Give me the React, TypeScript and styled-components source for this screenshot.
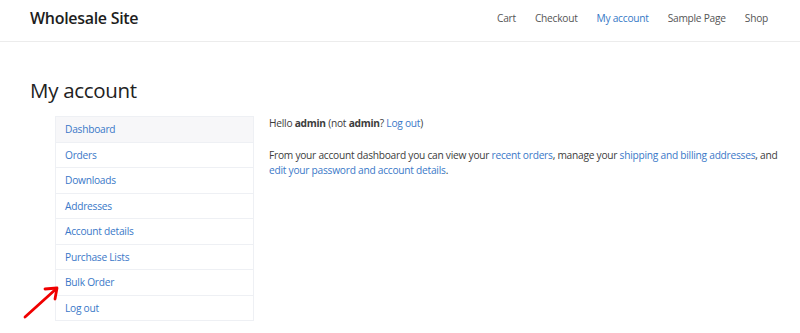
import styled, { createGlobalStyle } from "styled-components";

const GlobalStyle = createGlobalStyle`
  html, body {
    margin: 0;
    padding: 0;
    background: #ffffff;
  }
  body {
    font-family: "Open Sans", "Noto Sans", sans-serif;
    color: #3c3c3c;
  }
`;

const Header = styled.header`
  height: 42px;
  box-sizing: border-box;
  border-bottom: 1px solid #ececec;
  display: flex;
  align-items: center;
  justify-content: space-between;
  padding: 0 32px 0 30px;
`;

const SiteTitle = styled.div`
  font-size: 16px;
  font-weight: 600;
  color: #1d1d1d;
  letter-spacing: -0.3px;
  margin-top: -6px;
`;

const Nav = styled.nav`
  display: flex;
  gap: 19px;
  margin-top: -6px;
`;

const NavLink = styled.a<{ active?: boolean }>`
  font-size: 10.2px;
  color: ${(props) => (props.active ? "#3578c6" : "#555555")};
  text-decoration: none;
  letter-spacing: -0.25px;
`;

const Main = styled.main`
  padding: 33px 30px 0;
`;

const Title = styled.h1`
  margin: 0 0 11px;
  font-size: 20.5px;
  font-weight: 500;
  color: #222222;
  letter-spacing: -0.3px;
  line-height: 30px;
`;

const Columns = styled.div`
  display: flex;
  gap: 15px;
  padding-left: 25px;
`;

const SideWrap = styled.div`
  position: relative;
  flex-shrink: 0;
`;

const SideNav = styled.ul`
  list-style: none;
  margin: 0;
  padding: 0;
  width: 199px;
  box-sizing: border-box;
  border: 1px solid #eef0f4;
  border-bottom: none;
`;

const SideItem = styled.li<{ active?: boolean }>`
  height: 25.5px;
  box-sizing: border-box;
  border-bottom: 1px solid #eef0f4;
  background: ${(props) => (props.active ? "#f7f7f9" : "#ffffff")};
  display: flex;
  align-items: center;
  padding-left: 9px;
`;

const SideLink = styled.a`
  font-size: 10.2px;
  color: #3a78c8;
  text-decoration: none;
  letter-spacing: -0.25px;
`;

const Arrow = styled.svg`
  position: absolute;
  left: -34px;
  top: 165px;
`;

const Content = styled.div`
  font-size: 10.2px;
  line-height: 15px;
  color: #3c3c3c;
  letter-spacing: -0.25px;
  width: 512px;
  flex-shrink: 0;
`;

const Para = styled.p`
  margin: 0 0 17px;
`;

const Link = styled.a`
  color: #3a78c8;
  text-decoration: none;
`;

const navItems = [
  "Dashboard",
  "Orders",
  "Downloads",
  "Addresses",
  "Account details",
  "Purchase Lists",
  "Bulk Order",
  "Log out",
];

const App = () => {
  return (
    <>
      <GlobalStyle />
      <Header>
        <SiteTitle>Wholesale Site</SiteTitle>
        <Nav>
          <NavLink>Cart</NavLink>
          <NavLink>Checkout</NavLink>
          <NavLink active>My account</NavLink>
          <NavLink>Sample Page</NavLink>
          <NavLink>Shop</NavLink>
        </Nav>
      </Header>
      <Main>
        <Title>My account</Title>
        <Columns>
          <SideWrap>
            <SideNav>
              {navItems.map((item, i) => (
                <SideItem key={item} active={i === 0}>
                  <SideLink>{item}</SideLink>
                </SideItem>
              ))}
            </SideNav>
            <Arrow width="42" height="40" viewBox="0 0 42 40">
              <line
                x1="4"
                y1="36"
                x2="35"
                y2="8"
                stroke="#f00000"
                strokeWidth="2.8"
                strokeLinecap="round"
              />
              <polyline
                points="24,8 36,7 34,18"
                fill="none"
                stroke="#f00000"
                strokeWidth="2.8"
                strokeLinecap="round"
                strokeLinejoin="round"
              />
            </Arrow>
          </SideWrap>
          <Content>
            <Para>
              Hello <b>admin</b> (not <b>admin</b>? <Link>Log out</Link>)
            </Para>
            <Para>
              From your account dashboard you can view your{" "}
              <Link>recent orders</Link>, manage your{" "}
              <Link>shipping and billing addresses</Link>, and{" "}
              <Link>edit your password and account details</Link>.
            </Para>
          </Content>
        </Columns>
      </Main>
    </>
  );
};

export default App;
